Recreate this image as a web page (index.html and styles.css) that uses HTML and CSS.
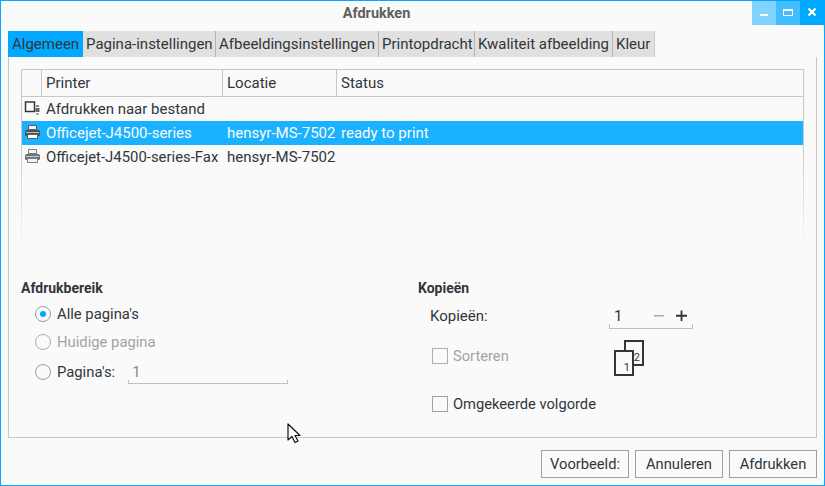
FILE: index.html
```html
<!DOCTYPE html>
<html lang="nl">
<head>
<meta charset="utf-8">
<title>Afdrukken</title>
<link rel="stylesheet" href="styles.css">
</head>
<body>
<div class="window">
  <header class="titlebar">
    <span class="title">Afdrukken</span>
    <div class="winbtns">
      <span class="winbtn min"><svg width="24" height="24" viewBox="0 0 24 24"><rect x="8" y="13" width="8" height="2" fill="#fff"/></svg></span>
      <span class="winbtn max"><svg width="24" height="24" viewBox="0 0 24 24"><rect x="7.500" y="8.500" width="9" height="6" fill="none" stroke="#fff"/><rect x="7" y="8" width="10" height="2" fill="#fff"/></svg></span>
      <span class="winbtn close"><svg width="24" height="24" viewBox="0 0 24 24"><path d="M8.500 7.500l7 7M15.500 7.500l-7 7" stroke="#fff" stroke-width="2.200" fill="none"/></svg></span>
    </div>
  </header>

  <nav class="tabs">
    <span class="tab active w-alg">Algemeen</span>
    <span class="tab w-pag">Pagina-instellingen</span>
    <span class="tab w-afb">Afbeeldingsinstellingen</span>
    <span class="tab w-pri">Printopdracht</span>
    <span class="tab w-kwa">Kwaliteit afbeelding</span>
    <span class="tab w-kle">Kleur</span>
  </nav>

  <main class="panel">
    <section class="table">
      <div class="row head">
        <span class="cell c-icon"></span>
        <span class="cell c-name">Printer</span>
        <span class="cell c-loc">Locatie</span>
        <span class="cell c-status">Status</span>
      </div>
      <div class="row">
        <span class="cell c-icon">
          <svg width="18" height="16" viewBox="0 0 18 16"><rect x="1.500" y="2" width="9" height="9.500" fill="#fafafa" stroke="#31363b" stroke-width="1.500"/><rect x="12" y="5" width="3" height="2" fill="#888"/><rect x="11.500" y="8" width="4" height="4" fill="#666"/><rect x="12.500" y="13" width="2" height="2" fill="#888"/></svg>
        </span>
        <span class="cell c-name">Afdrukken naar bestand</span>
        <span class="cell c-loc"></span>
        <span class="cell c-status"></span>
      </div>
      <div class="row selected">
        <span class="cell c-icon">
          <svg width="18" height="16" viewBox="0 0 18 16"><rect x="4.500" y="1.500" width="8" height="4" fill="#eaf6fc" stroke="#5a6167"/><rect x="1" y="6" width="15" height="6" rx="1.500" fill="#4d5257"/><rect x="2" y="8" width="13" height="1" fill="#b9c2c8"/><rect x="3.500" y="10.500" width="10" height="4" fill="#fff" stroke="#5a6167"/></svg>
        </span>
        <span class="cell c-name">Officejet-J4500-series</span>
        <span class="cell c-loc">hensyr-MS-7502</span>
        <span class="cell c-status">ready to print</span>
      </div>
      <div class="row">
        <span class="cell c-icon">
          <svg width="18" height="16" viewBox="0 0 18 16"><rect x="4.500" y="1.500" width="8" height="4" fill="#f4f4f4" stroke="#7d8287"/><rect x="1" y="6" width="15" height="6" rx="1.500" fill="#6d7277"/><rect x="2" y="8" width="13" height="1" fill="#c9cdd0"/><rect x="3.500" y="10.500" width="10" height="4" fill="#f4f4f4" stroke="#7d8287"/></svg>
        </span>
        <span class="cell c-name fax">Officejet-J4500-series-Fax</span>
        <span class="cell c-loc">hensyr-MS-7502</span>
        <span class="cell c-status"></span>
      </div>
    </section>

    <div class="groups">
      <section class="group range">
        <h2 class="group-title">Afdrukbereik</h2>
        <div class="opt o1"><span class="radio checked"></span><span>Alle pagina's</span></div>
        <div class="opt o2 disabled"><span class="radio"></span><span>Huidige pagina</span></div>
        <div class="opt o3">
          <span class="radio"></span><span>Pagina's:</span>
          <span class="field pages">1</span>
        </div>
      </section>

      <section class="group copies">
        <h2 class="group-title">Kopieën</h2>
        <div class="copyrow">
          <span class="copylabel">Kopieën:</span>
          <span class="field spin">
            <span class="spinval">1</span>
            <svg class="spinbtn" width="12" height="12" viewBox="0 0 12 12"><rect x="1" y="5" width="10" height="1.500" fill="#aaa"/></svg>
            <svg class="spinbtn" width="13" height="12" viewBox="0 0 13 12"><path d="M1 5.750h11M6.500 0.500v10.500" stroke="#31363b" stroke-width="1.800" fill="none"/></svg>
          </span>
        </div>
        <div class="collate">
          <div class="check disabled"><span class="box"></span><span>Sorteren</span></div>
          <div class="pages-icon">
            <span class="sheet s2">2</span>
            <span class="sheet s1">1</span>
          </div>
        </div>
        <div class="check reverse"><span class="box"></span><span>Omgekeerde volgorde</span></div>
      </section>
      <svg class="cursor" width="16" height="22" viewBox="0 0 16 22"><path d="M1 1v16l4-3.500 3 6 3-1.500-3-5.500h5z" fill="#fff" stroke="#111" stroke-width="1.200" stroke-linejoin="round"/></svg>
    </div>
  </main>

  <footer class="footer">
    <button class="btn">Voorbeeld:</button>
    <button class="btn">Annuleren</button>
    <button class="btn">Afdrukken</button>
  </footer>
</div>
</body>
</html>
```

FILE: styles.css
```css
* { box-sizing: border-box; }
html, body { margin: 0; padding: 0; }
body {
  width: 825px;
  height: 486px;
  overflow: hidden;
  font-family: Roboto, "Liberation Sans", sans-serif;
  font-size: 15px;
  color: #31363b;
  background: #fafafa;
}
.window {
  width: 825px;
  height: 486px;
  border: 1px solid #00a8ff;
  display: flex;
  flex-direction: column;
  padding: 0 7px;
  position: relative;
}
.titlebar {
  height: 30px;
  flex: none;
  display: flex;
  justify-content: center;
  padding-right: 72px;
}
.title {
  font-weight: 700;
  font-size: 14.500px;
  color: #5f5f5f;
  line-height: 26px;
}
.winbtns {
  position: absolute;
  top: 0;
  right: 0;
  display: flex;
}
.winbtn { width: 24px; height: 24px; display: block; }
.winbtn svg { display: block; }
.min { background: #80d4ff; }
.max { background: #40beff; }
.close { background: #00a8ff; }

.tabs { display: flex; height: 26px; flex: none; }
.tab {
  background: #e0e0e0;
  border-right: 1px solid #b4b4b4;
  line-height: 26px;
  padding-left: 3px;
  white-space: nowrap;
  overflow: hidden;
  flex: none;
}
.tab.active { background: #00a8ff; border-right: 0; padding-left: 4px; }
.tab:last-child { border-right: 1px solid #c8c8c8; }
.w-alg { width: 75px; }
.w-pag { width: 133px; }
.w-afb { width: 163px; }
.w-pri { width: 96px; }
.w-kwa { width: 138px; }
.w-kle { width: 42px; }

.panel {
  height: 381px;
  flex: none;
  border: 1px solid #c8c8c8;
  border-top: 0;
  padding: 12px 12px 0 12px;
  display: flex;
  flex-direction: column;
}
.table {
  height: 174px;
  flex: none;
  border-top: 1px solid #c8c8c8;
  border-left: 1px solid transparent;
  border-right: 1px solid transparent;
  border-image: linear-gradient(#c8c8c8 0, #c8c8c8 40%, #f6f6f6 100%) 1;
  border-bottom: 0;
}
.row { display: flex; height: 24px; line-height: 24px; }
.row.head { height: 27px; line-height: 26px; border-bottom: 1px solid #c8c8c8; }
.row.head .cell { border-right: 1px solid #c8c8c8; height: 26px; }
.row.head .cell:last-child { border-right: 0; }
.cell { display: block; padding-left: 4px; white-space: nowrap; flex: none; }
.c-icon { width: 20px; padding-left: 2px; }
.c-icon svg { display: block; margin-top: 3px; }
.c-name { width: 181px; }
.fax { font-size: 14.900px; }
.c-loc { width: 114px; }
.c-status { flex: 1; }
.selected { background: #1ab2ff; color: #fafafa; }

.groups {
  flex: 1;
  display: flex;
  position: relative;
  padding-top: 35px;
}
.group-title {
  margin: 0;
  font-size: 14px;
  font-weight: 700;
  line-height: 20px;
}
.range { width: 397px; flex: none; }
.copies { flex: 1; }
.opt {
  display: flex;
  align-items: center;
  gap: 6px;
  margin-left: 14px;
  height: 24px;
  font-size: 14.800px;
}
.o1 { margin-top: 4px; }
.o2 { margin-top: 4px; }
.o3 { margin-top: 6px; }
.radio {
  width: 16px;
  height: 16px;
  border: 1px solid #9a9a9a;
  border-radius: 50%;
  display: flex;
  align-items: center;
  justify-content: center;
  flex: none;
}
.radio.checked::after {
  content: "";
  width: 6px;
  height: 6px;
  border-radius: 50%;
  background: #00a8ff;
}
.disabled { color: #a0a3a6; }
.disabled .radio { border-color: #aeaeae; }
.field {
  display: flex;
  align-items: flex-start;
  border: 1px solid #c8c8c8;
  border-top: 0;
  border-image: linear-gradient(transparent 0, transparent 78%, #c0c0c0 78%) 1;
}
.pages {
  width: 160px;
  margin-left: 7px;
  padding-left: 3px;
  color: #8a8a8a;
  line-height: 12px;
  height: 18px;
  align-self: flex-end;
}
.copyrow {
  display: flex;
  align-items: center;
  margin: 4px 0 0 12px;
  height: 27px;
}
.copylabel { width: 179px; flex: none; }
.spin {
  width: 84px;
  height: 20px;
  padding-left: 4px;
  line-height: 14px;
  align-self: flex-end;
}
.spinval { width: 39px; flex: none; }
.spinbtn { margin: 1px 5px 0 0; display: block; flex: none; }
.spinbtn + .spinbtn { margin-left: 5px; margin-right: 0; }
.collate {
  display: flex;
  margin: 11px 0 0 14px;
  height: 36px;
}
.check { display: flex; align-items: center; gap: 5px; height: 24px; font-size: 14.700px; }
.collate .check { width: 182px; margin-top: 4px; flex: none; }
.box {
  width: 16px;
  height: 16px;
  border: 1px solid #a0a0a0;
  flex: none;
}
.disabled .box { border-color: #b0b0b0; }
.reverse { margin: 16px 0 0 14px; }
.pages-icon { position: relative; width: 30px; height: 36px; }
.sheet {
  position: absolute;
  border: 2px solid #31363b;
  background: #fafafa;
  font-size: 11px;
  line-height: 12px;
  display: flex;
  align-items: flex-end;
  justify-content: flex-end;
  padding-right: 2px;
}
.s2 { left: 10px; top: 0; width: 20px; height: 26px; }
.s1 { left: 0; top: 10px; width: 20px; height: 26px; }
.cursor { position: absolute; left: 266px; top: 180px; }

.footer {
  flex: 1;
  display: flex;
  justify-content: flex-end;
  align-items: flex-start;
  gap: 6px;
  padding-top: 12px;
}
.btn {
  width: 88px;
  height: 28px;
  background: #fafafa;
  border: 1px solid #a0a0a0;
  border-radius: 0;
  font: inherit;
  font-size: 14.700px;
  color: inherit;
  padding: 0;
}
```
